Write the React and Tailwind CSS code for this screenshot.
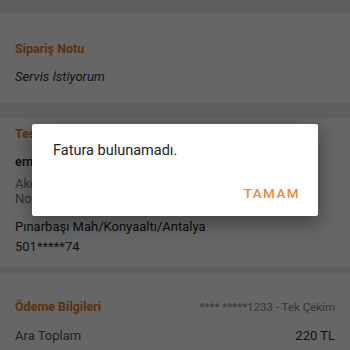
export default function App() {
  return (
    <div
      className="relative h-[350px] w-[350px] overflow-hidden bg-[#ededed]"
      style={{ fontFamily: 'Roboto, "Noto Sans", sans-serif' }}
    >
      <div className="flex flex-col pt-[13px]">
        <div className="flex h-[90px] flex-col bg-white px-[15px] pt-[29px]">
          <div className="text-[12.5px] font-bold leading-[14px] text-[#e07b2a]">Sipariş Notu</div>
          <div className="mt-[13px] text-[13px] italic leading-[16px] text-[#333]">Servis İstiyorum</div>
        </div>
        <div className="mt-[15px] flex h-[149px] flex-col bg-white px-[15px] pt-[9px]">
          <div className="text-[12.5px] font-bold leading-[14px] text-[#e07b2a]">Teslimat Bilgileri</div>
          <div className="mt-[13px] text-[13px] font-medium leading-[16px] text-[#222]">emre.yilmaz@gmail.com</div>
          <div className="mt-[6px] text-[13px] leading-[15px] text-[#777]">
            Akdeniz Mah. Konyaaltı Cad. Deniz Apt. Kat:3 Daire
            <br />
            No:12
          </div>
          <div className="mt-[13px] text-[13px] leading-[16px] text-[#222]">Pınarbaşı Mah/Konyaaltı/Antalya</div>
          <div className="mt-[4px] text-[13px] leading-[16px] text-[#333]">501*****74</div>
        </div>
        <div className="mt-[7px] flex h-[90px] flex-col bg-white px-[15px] pt-[26px]">
          <div className="flex items-center justify-between">
            <div className="text-[12.5px] font-bold leading-[14px] text-[#e07b2a]">Ödeme Bilgileri</div>
            <div className="text-[11.5px] leading-[14px] text-[#888]">**** *****1233 - Tek Çekim</div>
          </div>
          <div className="mt-[14px] flex items-center justify-between text-[13px] leading-[16px] text-[#333]">
            <span className="text-[#555]">Ara Toplam</span>
            <span>220 TL</span>
          </div>
        </div>
      </div>

      <div className="absolute inset-0 bg-black/60" />

      <div className="absolute left-[32px] top-[124px] flex h-[92px] w-[286px] flex-col rounded-[2px] bg-white px-[21px] shadow-[0_6px_20px_rgba(0,0,0,0.4)]">
        <div className="mt-[18px] text-[14.5px] leading-[18px] text-[#222]">Fatura bulunamadı.</div>
        <div className="mt-[23px] flex justify-end">
          <span className="mr-[-3px] text-[13.5px] font-medium tracking-[1.4px] text-[#ea8a3c]">TAMAM</span>
        </div>
      </div>
    </div>
  )
}
